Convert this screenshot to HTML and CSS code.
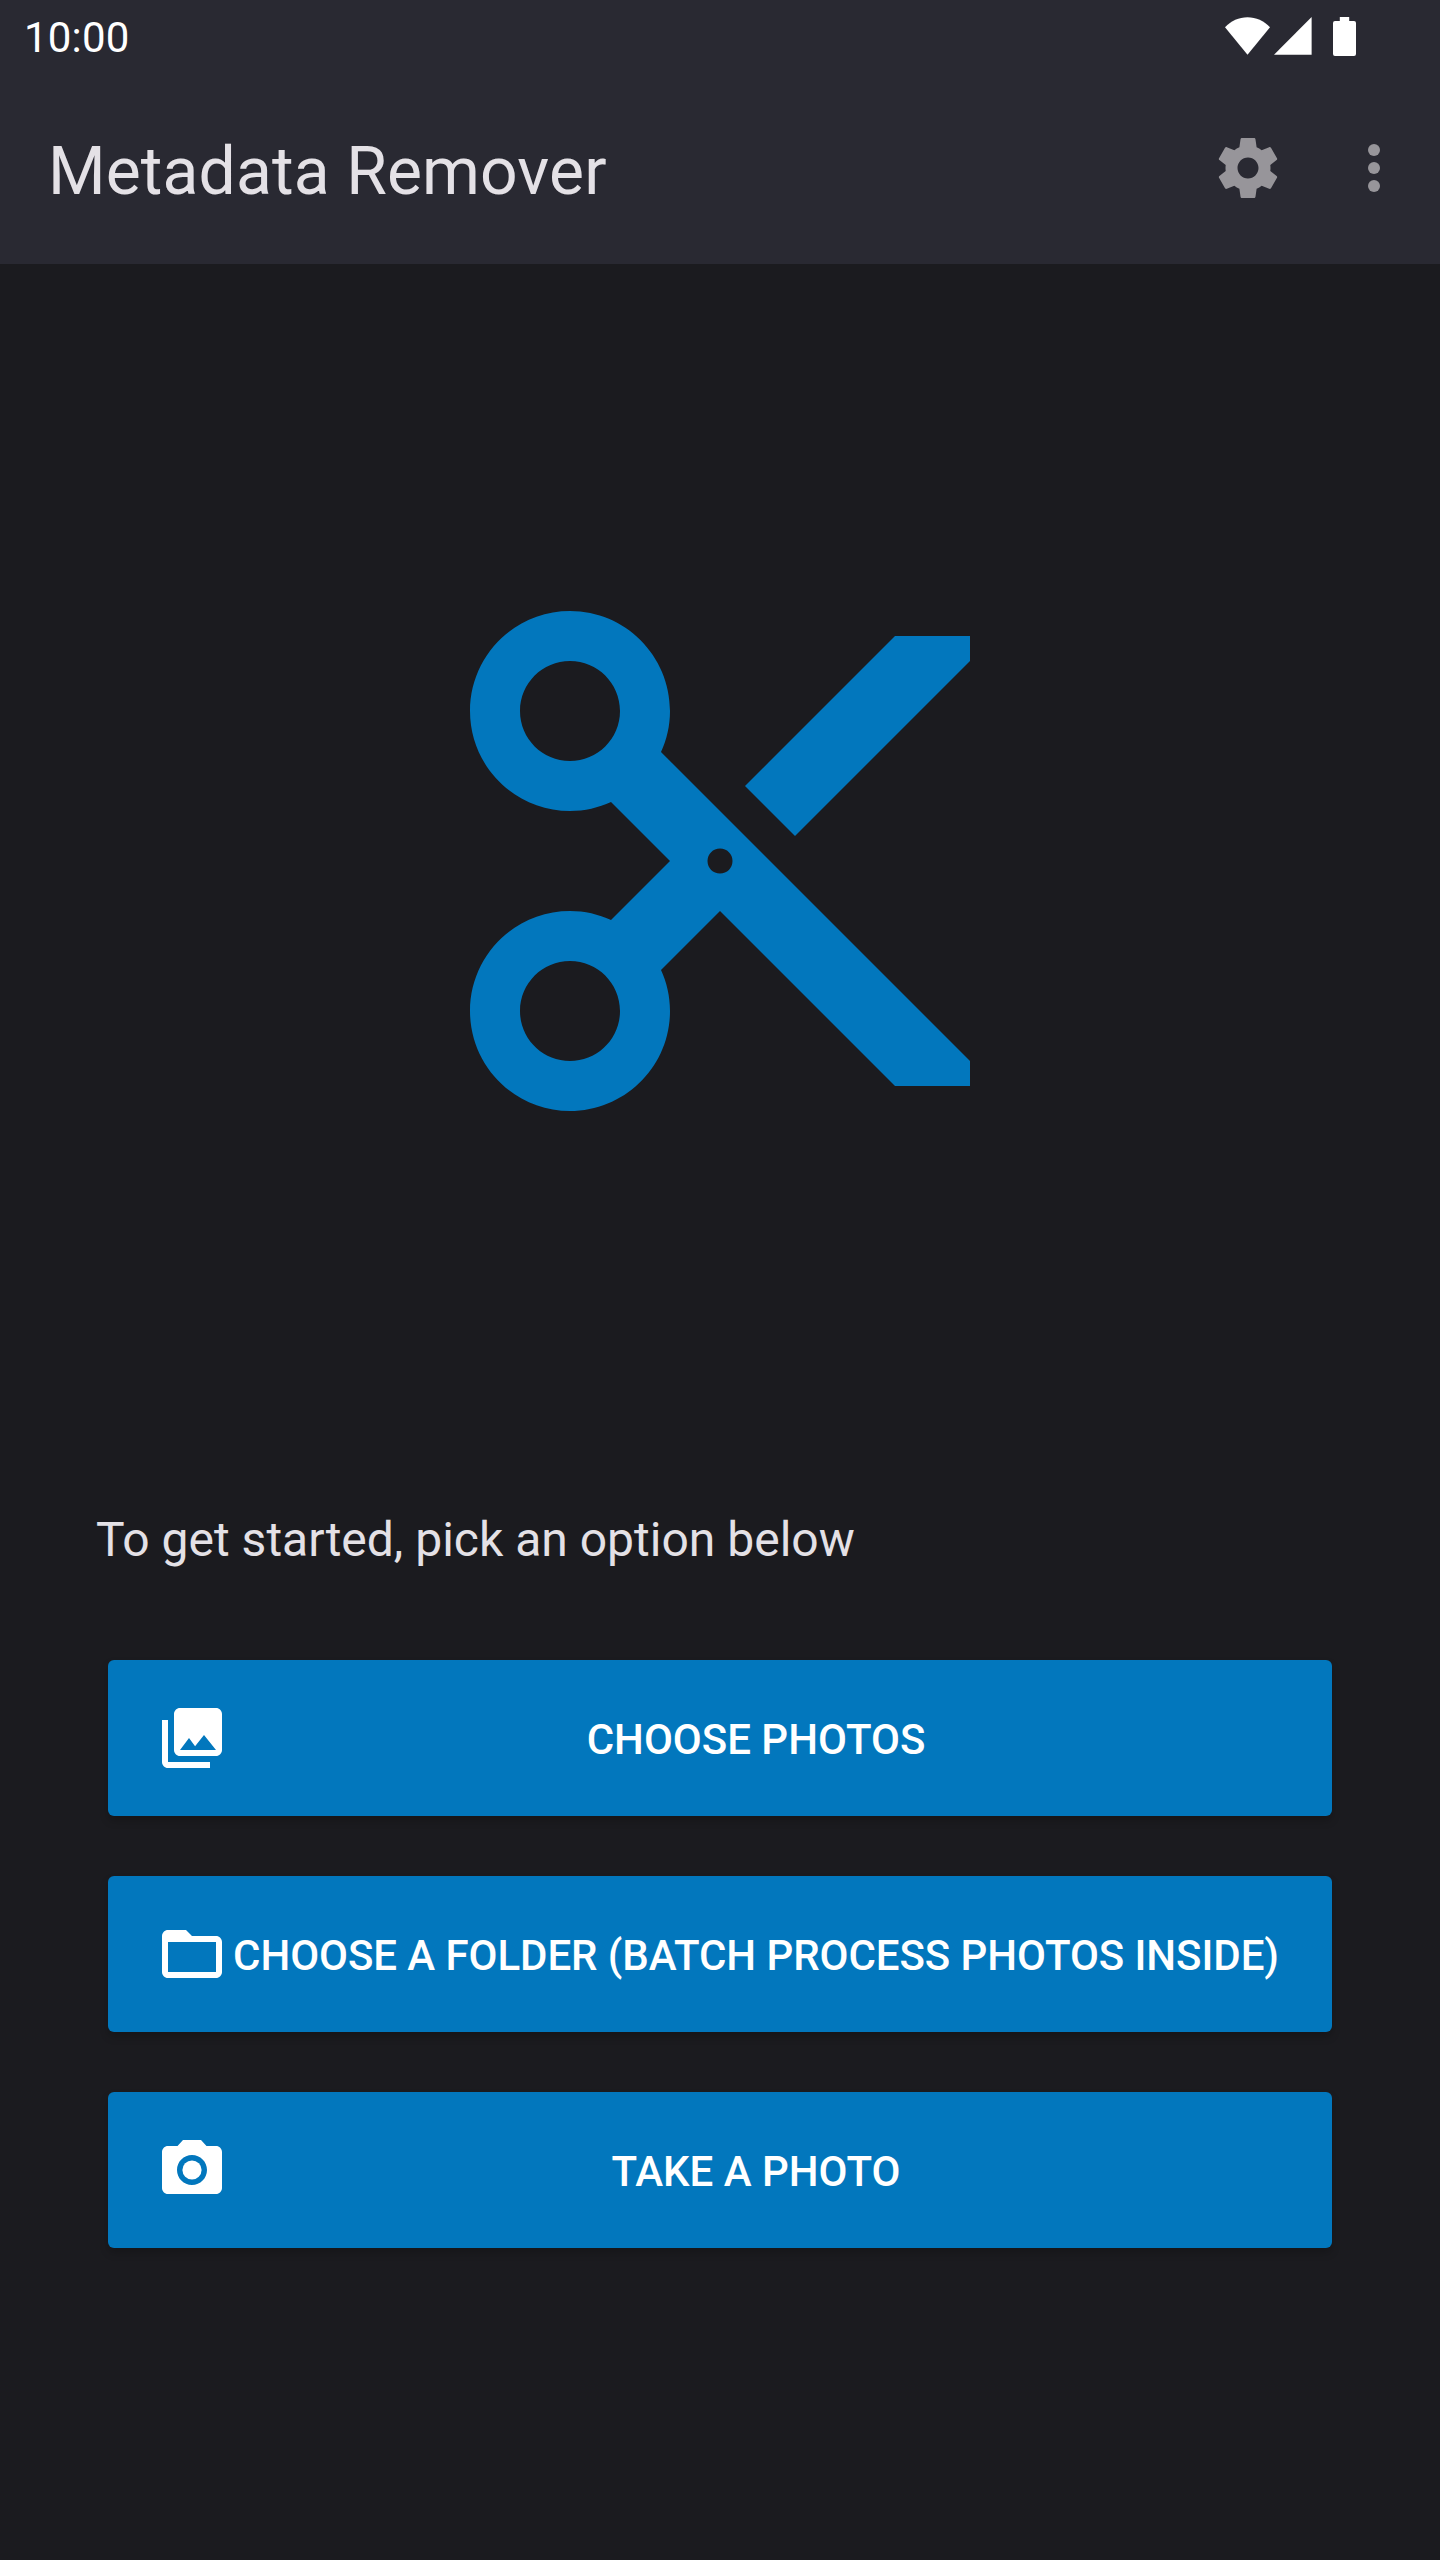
FILE: index.html
```html
<!DOCTYPE html>
<html lang="en">
<head>
    <meta charset="UTF-8">
    <meta name="viewport" content="width=device-width, initial-scale=1.0">
    <title>Metadata Remover</title>
    <link rel="stylesheet" href="styles.css">
</head>
<body>
    <header class="top">
        <div class="status-bar">
            <span class="clock">10:00</span>
            <div class="status-icons">
                <!-- wifi -->
                <svg class="wifi" viewBox="0 0 45 38"><path d="M0 10.3C6 3.8 14 .3 22.5.3S39 3.8 45 10.3L22.5 37.7z"/></svg>
                <!-- signal -->
                <svg class="signal" viewBox="0 0 38 38"><path d="M0 37.7L37.6 0v37.7z"/></svg>
                <!-- battery -->
                <svg class="battery" viewBox="0 0 23 39"><path d="M6.8 0h9.4v4H21a2 2 0 0 1 2 2v31a2 2 0 0 1-2 2H2a2 2 0 0 1-2-2V6a2 2 0 0 1 2-2h4.8z"/></svg>
            </div>
        </div>
        <div class="toolbar">
            <h1 class="title">Metadata Remover</h1>
            <div class="actions">
                <button class="action" aria-label="Settings">
                    <svg class="icon" viewBox="0 0 24 24"><path d="M19.43 12.98c.04-.32.07-.64.07-.98s-.03-.66-.07-.98l2.11-1.65c.19-.15.24-.42.12-.64l-2-3.46c-.12-.22-.39-.3-.61-.22l-2.49 1c-.52-.4-1.08-.73-1.69-.98l-.38-2.65C14.46 2.18 14.25 2 14 2h-4c-.25 0-.46.18-.49.42l-.38 2.65c-.61.25-1.17.59-1.69.98l-2.49-1c-.23-.09-.49 0-.61.22l-2 3.46c-.13.22-.07.49.12.64l2.11 1.65c-.04.32-.07.65-.07.98s.03.66.07.98l-2.11 1.65c-.19.15-.24.42-.12.64l2 3.46c.12.22.39.3.61.22l2.49-1c.52.4 1.08.73 1.69.98l.38 2.65c.03.24.24.42.49.42h4c.25 0 .46-.18.49-.42l.38-2.65c.61-.25 1.17-.59 1.69-.98l2.49 1c.23.09.49 0 .61-.22l2-3.46c.12-.22.07-.49-.12-.64l-2.11-1.65zM12 15.5c-1.93 0-3.5-1.57-3.5-3.5s1.57-3.5 3.5-3.5 3.5 1.57 3.5 3.5-1.57 3.5-3.5 3.5z"/></svg>
                </button>
                <button class="action" aria-label="More options">
                    <svg class="icon" viewBox="0 0 24 24"><circle cx="12" cy="6" r="2"/><circle cx="12" cy="12" r="2"/><circle cx="12" cy="18" r="2"/></svg>
                </button>
            </div>
        </div>
    </header>

    <main class="content">
        <div class="hero">
            <svg class="scissors" viewBox="0 0 24 24"><path d="M9.64 7.64c.23-.5.36-1.05.36-1.64 0-2.21-1.79-4-4-4S2 3.79 2 6s1.79 4 4 4c.59 0 1.14-.13 1.64-.36L10 12l-2.36 2.36C7.14 14.13 6.59 14 6 14c-2.21 0-4 1.79-4 4s1.79 4 4 4 4-1.79 4-4c0-.59-.13-1.14-.36-1.64L12 14l7 7h3v-1L9.64 7.64zM6 8c-1.1 0-2-.89-2-2s.9-2 2-2 2 .89 2 2-.9 2-2 2zm0 12c-1.1 0-2-.89-2-2s.9-2 2-2 2 .89 2 2-.9 2-2 2zm6-7.5c-.28 0-.5-.22-.5-.5s.22-.5.5-.5.5.22.5.5-.22.5-.5.5zM19 3l-6 6 2 2 7-7V3z"/></svg>
        </div>

        <p class="prompt">To get started, pick an option below</p>

        <div class="options">
            <button class="option">
                <svg class="icon" viewBox="0 0 24 24"><path d="M22 16V4c0-1.1-.9-2-2-2H8c-1.1 0-2 .9-2 2v12c0 1.1.9 2 2 2h12c1.1 0 2-.9 2-2zm-11-4l2.03 2.71L16 11l4 5H8l3-4zM2 6v14c0 1.1.9 2 2 2h14v-2H4V6H2z"/></svg>
                <span class="label">Choose photos</span>
            </button>
            <button class="option">
                <svg class="icon" viewBox="0 0 24 24"><path d="M20 6h-8l-2-2H4c-1.1 0-1.99.9-1.99 2L2 18c0 1.1.9 2 2 2h16c1.1 0 2-.9 2-2V8c0-1.1-.9-2-2-2zm0 12H4V8h16v10z"/></svg>
                <span class="label label-long">Choose a folder (batch process photos inside)</span>
            </button>
            <button class="option">
                <svg class="icon" viewBox="0 0 24 24"><circle cx="12" cy="12" r="3.2"/><path d="M9 2L7.17 4H4c-1.1 0-2 .9-2 2v12c0 1.1.9 2 2 2h16c1.1 0 2-.9 2-2V6c0-1.1-.9-2-2-2h-3.17L15 2H9zm3 15c-2.76 0-5-2.24-5-5s2.24-5 5-5 5 2.24 5 5-2.24 5-5 5z"/></svg>
                <span class="label">Take a photo</span>
            </button>
        </div>
    </main>
</body>
</html>
```
FILE: styles.css
```css
* {
    box-sizing: border-box;
}
body {
    margin: 0;
    min-height: 100vh;
    display: flex;
    flex-direction: column;
    background-color: #1b1b1f;
    color: #e4e1e6;
    font-family: Roboto, "Liberation Sans", sans-serif;
}
button {
    border: 0;
    padding: 0;
    background: none;
    font-family: inherit;
    cursor: pointer;
}
svg {
    display: block;
    flex: none;
    fill: currentColor;
}
.icon {
    width: 72px;
    height: 72px;
}

/* Status bar and toolbar */
.top {
    background-color: #292932;
}
.status-bar {
    height: 72px;
    padding: 0 84px 0 24px;
    display: flex;
    justify-content: space-between;
    align-items: center;
    color: #fff;
}
.clock {
    font-size: 42px;
    line-height: 48px;
    letter-spacing: 0.2px;
    padding-top: 3px;
}
.status-icons {
    display: flex;
    align-items: flex-end;
    height: 39px;
}
.wifi {
    width: 45px;
    height: 38px;
    margin: 0 4px 1px 0;
}
.signal {
    width: 38px;
    height: 38px;
    margin: 0 21px 1px 0;
}
.battery {
    width: 23px;
    height: 39px;
}
.toolbar {
    height: 192px;
    padding: 0 30px 0 48px;
    display: flex;
    justify-content: space-between;
    align-items: center;
}
.title {
    margin: 0;
    padding-top: 7px;
    font-size: 66px;
    font-weight: 400;
    line-height: 78px;
    letter-spacing: 0.12px;
}
.actions {
    display: flex;
    gap: 54px;
    color: #97959a;
}
.action {
    color: inherit;
}

/* Main screen */
.content {
    flex: 1;
    padding: 0 96px;
}
.hero {
    height: 1193px;
    display: flex;
    justify-content: center;
    align-items: center;
    color: #0277bd;
}
.scissors {
    width: 600px;
    height: 600px;
}
.prompt {
    margin: 47px 0 0;
    font-size: 48px;
    line-height: 72px;
}
.options {
    display: flex;
    flex-direction: column;
    gap: 60px;
    padding: 84px 12px 0;
}
.option {
    height: 156px;
    padding: 0 48px;
    display: flex;
    align-items: center;
    border-radius: 6px;
    background-color: #0277bd;
    color: #fff;
    box-shadow: 0 5px 8px rgba(0, 0, 0, 0.2);
}
.label {
    flex: 1;
    padding-top: 3px;
    font-size: 42px;
    font-weight: 500;
    line-height: 48px;
    text-align: center;
    text-transform: uppercase;
    white-space: nowrap;
}
.label-long {
    letter-spacing: -0.06px;
}
```
